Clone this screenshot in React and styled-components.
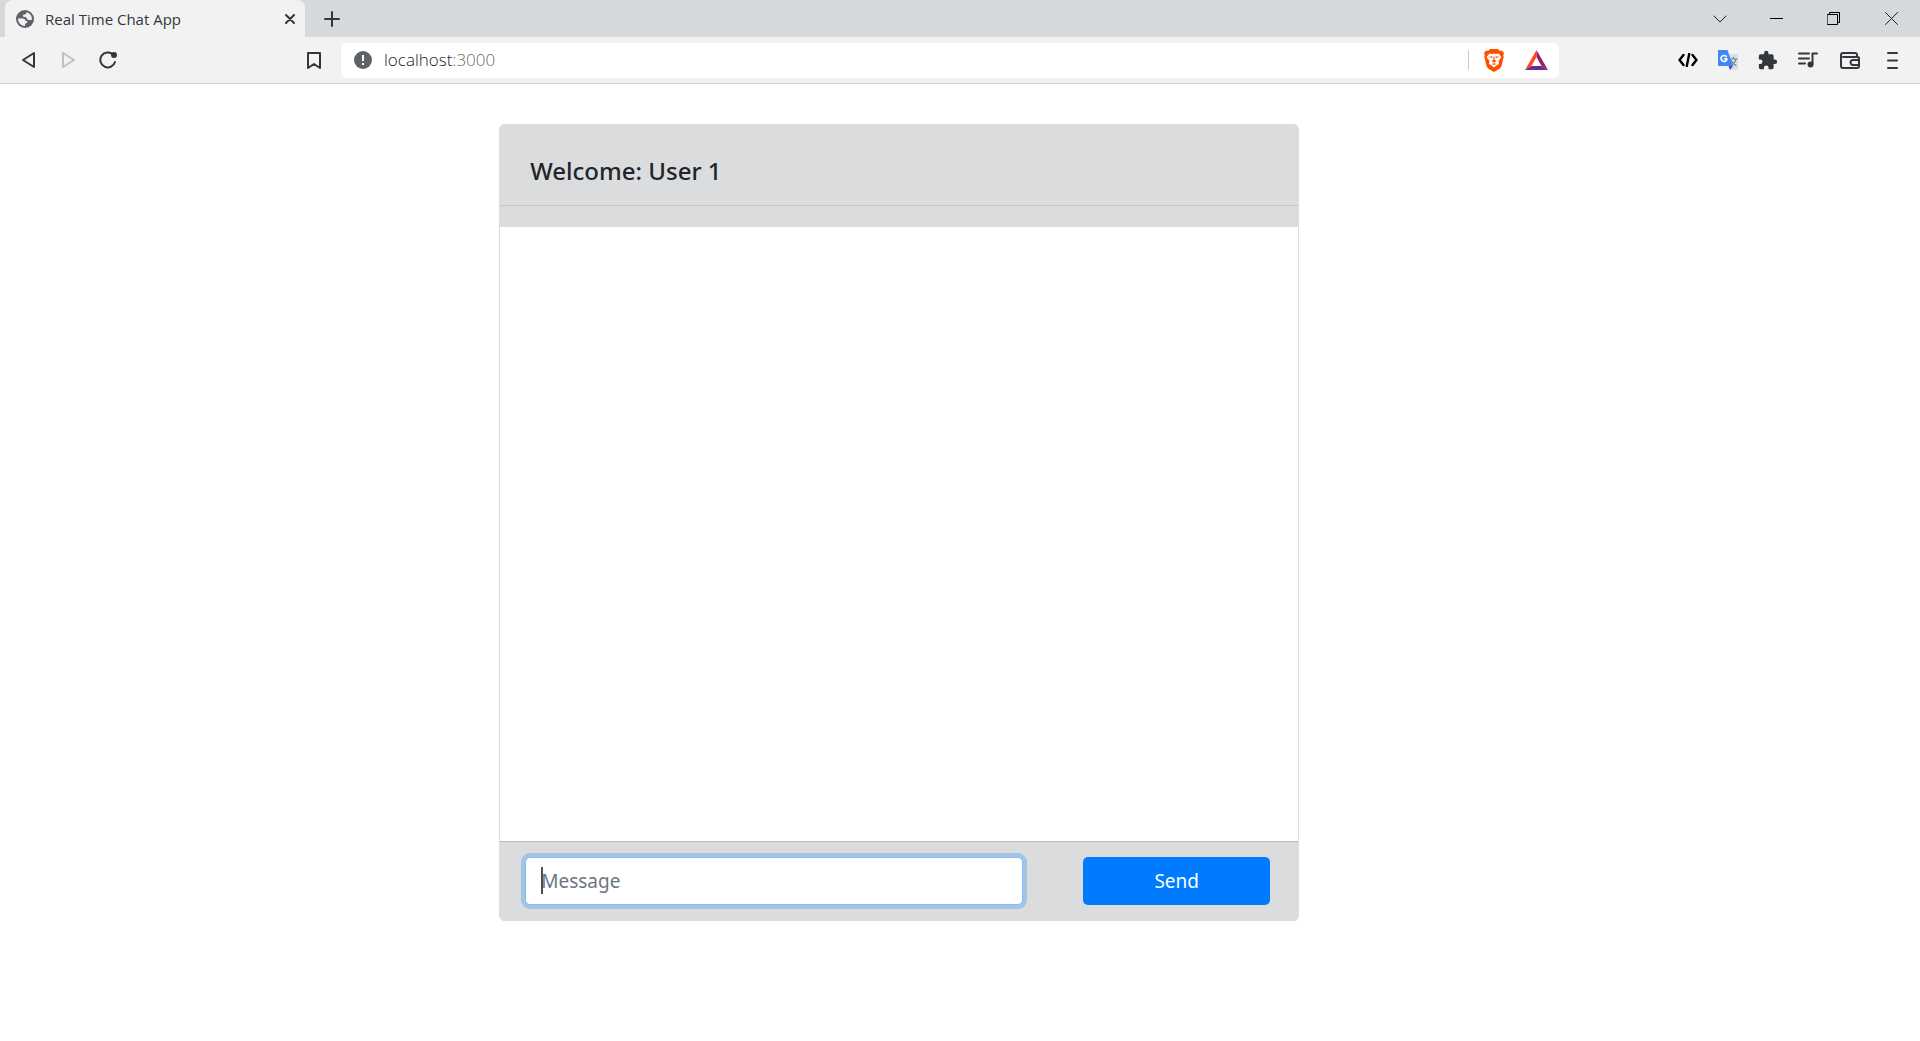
import React from "react";
import styled, { createGlobalStyle } from "styled-components";

const GlobalStyle = createGlobalStyle`
  *, *::before, *::after { box-sizing: border-box; }
  body { margin: 0; background: #fff; color: #212529; font-family: "Noto Sans", "Open Sans", sans-serif; }
  button { font: inherit; cursor: pointer; }
  svg { display: block; }
`;

const TabStrip = styled.header`
  display: flex;
  align-items: stretch;
  height: 37px;
  padding-left: 5px;
  background: #d5d9dc;
`;

const Tab = styled.div`
  display: flex;
  align-items: center;
  width: 300px;
  padding: 0 5px 0 11px;
  border-radius: 8px 8px 0 0;
  background: #f2f2f2;
  color: #33373c;
`;

const TabTitle = styled.span`
  flex: 1;
  margin-left: 11px;
  font-family: "Open Sans", sans-serif;
  font-size: 15px;
  line-height: 20px;
`;

const IconButton = styled.button`
  display: grid;
  place-items: center;
  flex: none;
  width: ${(p) => p.$width || 40}px;
  height: ${(p) => p.$height || 30}px;
  padding: 0;
  border: 0;
  background: none;
  color: ${(p) => p.$color || "#33373c"};
`;

const WindowControls = styled.div`
  display: flex;
  align-items: center;
  margin-left: auto;
`;

const Toolbar = styled.nav`
  display: flex;
  align-items: center;
  height: 47px;
  padding: 0 8px;
  border-bottom: 1px solid #d3d5d7;
  background: #f2f2f2;
`;

const NavButtons = styled.div`
  display: flex;
  flex: none;
  width: 286px;
`;

const AddressBar = styled.div`
  display: flex;
  align-items: center;
  flex: 1;
  height: 35px;
  margin: 0 109px 0 7px;
  padding: 0 2px 0 13px;
  border-radius: 5px;
  background: #fff;
`;

const Address = styled.span`
  flex: 1;
  margin-left: 12px;
  color: #65696e;
  font-family: "Open Sans", sans-serif;
  font-size: 17px;
  font-weight: 300;
  line-height: 24px;
`;

const Host = styled.span`
  color: #202327;
`;

const Divider = styled.span`
  width: 1px;
  height: 20px;
  margin-right: 4px;
  background: #c6c8ca;
`;

const Page = styled.main`
  padding: 40px 0 120px;
`;

const ChatCard = styled.section`
  width: 800px;
  max-width: 74%;
  margin-left: 26%;
  border: 1px solid #dadcdd;
  border-radius: 5px;
  background: #fff;
  overflow: hidden;
`;

const ChatHeader = styled.header`
  padding: 30px 0 21px;
  background: #dadcdd;
`;

const Title = styled.h1`
  margin: 0;
  padding: 0 30px 18px;
  border-bottom: 1px solid #c2c4c5;
  font-family: "Noto Sans", sans-serif;
  font-size: 24px;
  font-weight: 500;
  line-height: 32px;
`;

const Messages = styled.div`
  height: 614px;
`;

const Composer = styled.form`
  display: flex;
  justify-content: space-between;
  padding: 15px 28px 15px 25px;
  border-top: 1px solid #b9bcbf;
  background: #dadcdd;
`;

const MessageInput = styled.input`
  width: 498px;
  height: 48px;
  padding: 0 15px;
  border: 1px solid #80bdff;
  border-radius: 5px;
  outline: 0;
  box-shadow: 0 0 0 4px rgba(0, 123, 255, 0.25);
  background: #fff;
  color: #495057;
  font-family: "Noto Sans", sans-serif;
  font-size: 19px;
  &::placeholder { color: #6c757d; opacity: 1; }
`;

const SendButton = styled.button`
  width: 187px;
  height: 48px;
  border: 0;
  border-radius: 5px;
  background: #007bff;
  color: #fff;
  font-size: 19px;
`;

const InputWrap = styled.div`
  position: relative;
  display: flex;
`;

const Caret = styled.span`
  position: absolute;
  top: 10px;
  left: 16px;
  width: 2px;
  height: 27px;
  background: #495057;
`;

const Svg = ({ w = 20, h = w, box, stroke = 2, children }) => (
  <svg width={w} height={h} viewBox={box || `0 0 ${w} ${h}`} fill="none" stroke="currentColor"
    strokeWidth={stroke} strokeLinejoin="round" strokeLinecap="round" aria-hidden="true">
    {children}
  </svg>
);

const Globe = () => (
  <Svg w={18} stroke={0}>
    <circle cx="9" cy="9" r="9" fill="#5f6368" />
    <path fill="#f2f2f2" d="M10.500 2.200c-.2 1.600-1 2.300-2.300 2.300-.8 0-1.200.5-1.200 1.300 0 .9.600 1.200 1.500 1.200 1.600 0 2.200.6 2.500 1.700.3 1 1 1.300 2 1.300H15.900A7 7 0 0 0 10.500 2.200z" />
    <path fill="#f2f2f2" d="M2 8.500h4.500c2 0 3 1 3 2.500h1.800c0 1.800-.8 2.700-2.300 2.700V16A7 7 0 0 1 2 8.500z" />
  </Svg>
);

const Info = () => (
  <Svg w={18} stroke={0}>
    <circle cx="9" cy="9" r="9" fill="#5f6368" />
    <path fill="#fff" d="M8 4h2v6H8zM8 12h2v2H8z" />
  </Svg>
);

const Lion = () => (
  <Svg w={20} h={23} stroke={0}>
    <path fill="#ff5000" d="M6 0h8l2 2 2-.5L20 4l-.7 2 .4 2-2.200 9-1.500 2.500L10 23l-6-3.500L2.500 17 .3 8l.4-2L0 4l2-2.500L4 2z" />
    <path fill="#fff" d="M5.500 4.500L8 5l2-.5 2 .5 2.500-.5L17.500 8l-3 4 .5 3-2 1-3 2.500L7 16l-2-1 .5-3-3-4z" />
    <path fill="#ff5000" d="M5 7.200l4 .5-1.500 1.600zM15 7.200l-4 .5 1.500 1.600zM9.500 7.500h1l.2 3.500 1.800 1-2.500 1.700L7.500 12l1.800-1zM7.500 15l2.500-.8 2.500.8-2.500 1z" />
  </Svg>
);

const Triangle = () => (
  <Svg w={23} h={20} stroke={0}>
    <path fill="#ff4724" d="M11.500 0v7L6.500 16 0 20z" />
    <path fill="#9e1f63" d="M11.500 0L23 20l-6.500-4-5-9z" />
    <path fill="#662d91" d="M0 20l6.500-4h10l6.500 4z" />
  </Svg>
);

const Translate = () => (
  <Svg w={20} stroke={0}>
    <path fill="#dcdfe1" d="M8 4h11a1 1 0 0 1 1 1v14a1 1 0 0 1-1 1h-7z" />
    <path stroke="#6d7f8c" strokeWidth="1.200" d="M12 9h7M15.500 7.500V9M18 9c-.5 3-2.500 5-4.500 6M13.500 11c1 2 2.500 3.500 4.500 4.500" />
    <path fill="#3f51b5" d="M10.500 16H15l-3 4z" />
    <path fill="#4285f4" d="M1 0h8.500L15 16H1a1 1 0 0 1-1-1V1a1 1 0 0 1 1-1z" />
    <path stroke="#fff" strokeWidth="1.600" d="M8.300 6.500A3 3 0 1 0 9 8.700H6.500" />
  </Svg>
);

const Puzzle = () => (
  <Svg w={20} box="1 0 23 23" stroke={0}>
    <path fill="currentColor" d="M20.500 11H19V7a2 2 0 0 0-2-2h-4V3.500a2.500 2.500 0 0 0-5 0V5H4a2 2 0 0 0-2 2v3.800h1.500a2.700 2.700 0 0 1 0 5.400H2V20c0 1.100.9 2 2 2h3.800v-1.500a2.700 2.700 0 0 1 5.400 0V22H17a2 2 0 0 0 2-2v-4h1.500a2.500 2.500 0 0 0 0-5z" />
  </Svg>
);

export default function App() {
  return (
    <>
      <GlobalStyle />
      <TabStrip>
        <Tab>
          <Globe />
          <TabTitle>Real Time Chat App</TabTitle>
          <IconButton $width={20} aria-label="Close tab">
            <Svg w={10}><path d="M1 1l8 8M9 1L1 9" /></Svg>
          </IconButton>
        </Tab>
        <IconButton $width={54} $height={37} aria-label="New tab">
          <Svg w={16} stroke={2}><path d="M8 1v14M1 8h14" /></Svg>
        </IconButton>
        <WindowControls>
          <IconButton $width={57} aria-label="Search tabs" $color="#222">
            <Svg w={14} h={8} stroke={1}><path d="M1 1l6 6 6-6" /></Svg>
          </IconButton>
          <IconButton $width={57} aria-label="Minimize" $color="#000">
            <Svg w={13} h={1} stroke={0}><path fill="currentColor" d="M0 0h13v1H0z" /></Svg>
          </IconButton>
          <IconButton $width={57} aria-label="Restore" $color="#000">
            <Svg w={13} stroke={1}><path d="M.5 2.500h10v10H.5zM2.500 2.500v-2h10v10h-2" /></Svg>
          </IconButton>
          <IconButton $width={58} aria-label="Close window" $color="#222">
            <Svg w={13} stroke={1}><path d="M.5.5l12 12M12.500.5l-12 12" /></Svg>
          </IconButton>
        </WindowControls>
      </TabStrip>
      <Toolbar>
        <NavButtons>
          <IconButton aria-label="Back">
            <Svg w={13} h={16}><path d="M12 1v14L1 8z" /></Svg>
          </IconButton>
          <IconButton aria-label="Forward" $color="#bfc0c1">
            <Svg w={13} h={16}><path d="M1 1v14l11-7z" /></Svg>
          </IconButton>
          <IconButton aria-label="Reload">
            <Svg w={18}>
              <path d="M14 3.500A7.500 7.500 0 1 0 16 11" />
              <circle cx="15" cy="4" r="2" fill="currentColor" />
            </Svg>
          </IconButton>
        </NavButtons>
        <IconButton aria-label="Bookmark this page">
          <Svg w={14} h={17}><path d="M1 1h12v15l-6-4-6 4z" /></Svg>
        </IconButton>
        <AddressBar>
          <Info />
          <Address><Host>localhost</Host>:3000</Address>
          <Divider />
          <IconButton $width={42} aria-label="Brave Shields"><Lion /></IconButton>
          <IconButton $width={42} aria-label="Brave Rewards"><Triangle /></IconButton>
        </AddressBar>
        <IconButton aria-label="Developer tools" $color="#000">
          <Svg w={20} h={14}><path strokeWidth="2.400" d="M5.500 2L1.500 7l4 5M14.500 2l4 5-4 5M11.200 1L8.800 13" /></Svg>
        </IconButton>
        <IconButton aria-label="Translate"><Translate /></IconButton>
        <IconButton aria-label="Extensions"><Puzzle /></IconButton>
        <IconButton aria-label="Media controls">
          <Svg w={20} h={16}>
            <path d="M1 1.500h10M1 6.500h10M1 11.500h6M14.500 12V1.500H19" />
            <circle cx="12.500" cy="12.500" r="2" fill="currentColor" />
          </Svg>
        </IconButton>
        <IconButton $width={44} aria-label="Wallet">
          <Svg w={20} h={17}>
            <path d="M17 5V3a2 2 0 0 0-2-2H3a2 2 0 0 0-2 2v11a2 2 0 0 0 2 2h14a2 2 0 0 0 2-2V6a1 1 0 0 0-1-1H3M19 8h-6a2.500 2.500 0 0 0 0 5h6" />
          </Svg>
        </IconButton>
        <IconButton aria-label="Menu">
          <Svg w={11} h={17}><path d="M1 1h9M1 8.500h9M1 16h9" /></Svg>
        </IconButton>
      </Toolbar>
      <Page>
        <ChatCard>
          <ChatHeader><Title>Welcome: User 1</Title></ChatHeader>
          <Messages role="log" aria-label="Messages" />
          <Composer onSubmit={(e) => e.preventDefault()}>
            <InputWrap>
              <MessageInput type="text" placeholder="Message" aria-label="Message" />
              <Caret />
            </InputWrap>
            <SendButton type="submit">Send</SendButton>
          </Composer>
        </ChatCard>
      </Page>
    </>
  );
}
